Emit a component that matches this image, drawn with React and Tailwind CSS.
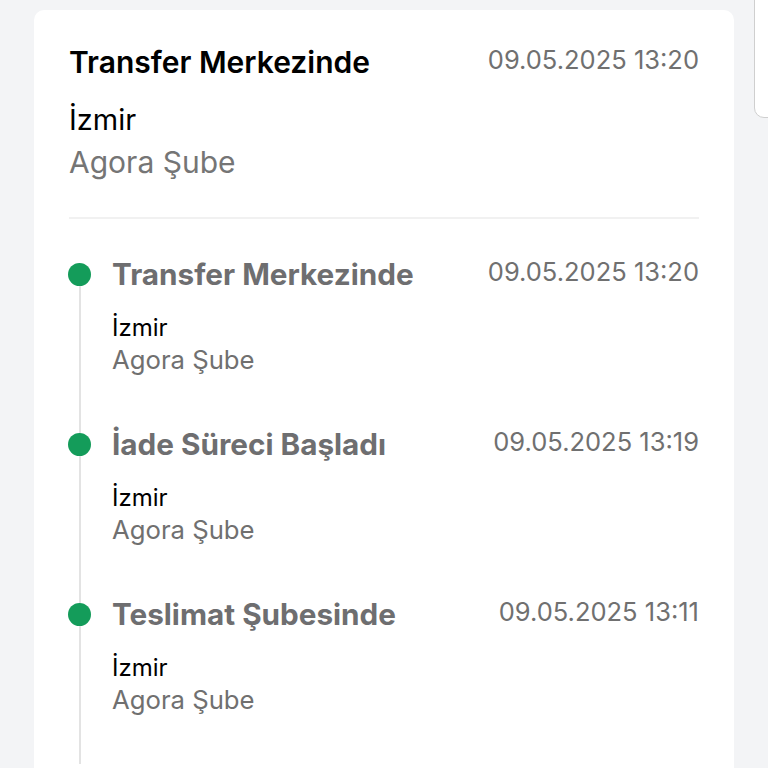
import React from "react";

const events = [
    { title: "Transfer Merkezinde", date: "09.05.2025 13:20", city: "İzmir", branch: "Agora Şube" },
    { title: "İade Süreci Başladı", date: "09.05.2025 13:19", city: "İzmir", branch: "Agora Şube" },
    { title: "Teslimat Şubesinde", date: "09.05.2025 13:11", city: "İzmir", branch: "Agora Şube" },
];

const TimelineItem = ({ item }) => (
    <div className="relative flex pb-[48px]">
        <div className="w-[43px] shrink-0 flex justify-start">
            <div className="mt-[9px] ml-[-1px] w-[23px] h-[23px] rounded-full bg-[#149c5a] z-10" />
        </div>
        <div className="flex-1">
            <div className="flex justify-between items-start">
                <h3 className="text-[29.7px] leading-[40px] font-bold text-[#6e6e70]">{item.title}</h3>
                <span className="text-[25.5px] leading-[36px] text-[#707070]">{item.date}</span>
            </div>
            <p className="mt-[18px] text-[24px] leading-[32px] text-black">{item.city}</p>
            <p className="text-[25.7px] leading-[32px] text-[#707070]">{item.branch}</p>
        </div>
    </div>
);

export default function App() {
    return (
        <div
            className="w-[768px] h-[768px] overflow-hidden bg-[#f3f4f6] relative"
            style={{ fontFamily: "Inter, 'Noto Sans', sans-serif" }}
        >
            <div className="absolute right-[-20px] top-[-10px] w-[34px] h-[128px] bg-white border border-[#cfcfcf] rounded-bl-[10px]" />
            <div className="ml-[34px] mt-[10px] w-[700px] h-[800px] bg-white rounded-[10px] px-[35px] pt-[33px]">
                <div className="flex justify-between items-start">
                    <h2 className="text-[30px] leading-[38px] font-semibold text-black">Transfer Merkezinde</h2>
                    <span className="text-[25.5px] leading-[34px] text-[#707070]">09.05.2025 13:20</span>
                </div>
                <p className="mt-[19px] text-[29px] leading-[40px] text-black">İzmir</p>
                <p className="text-[30px] leading-[44px] text-[#757575]">Agora Şube</p>
                <div className="mt-[33px] h-[2px] bg-[#f1f1f1]" />
                <div className="relative pt-[35px]">
                    <div className="absolute left-[10px] top-[62px] bottom-0 w-[2px] bg-[#e3e3e3]" />
                    {events.map((e, i) => (
                        <TimelineItem key={i} item={e} />
                    ))}
                </div>
            </div>
        </div>
    );
}
